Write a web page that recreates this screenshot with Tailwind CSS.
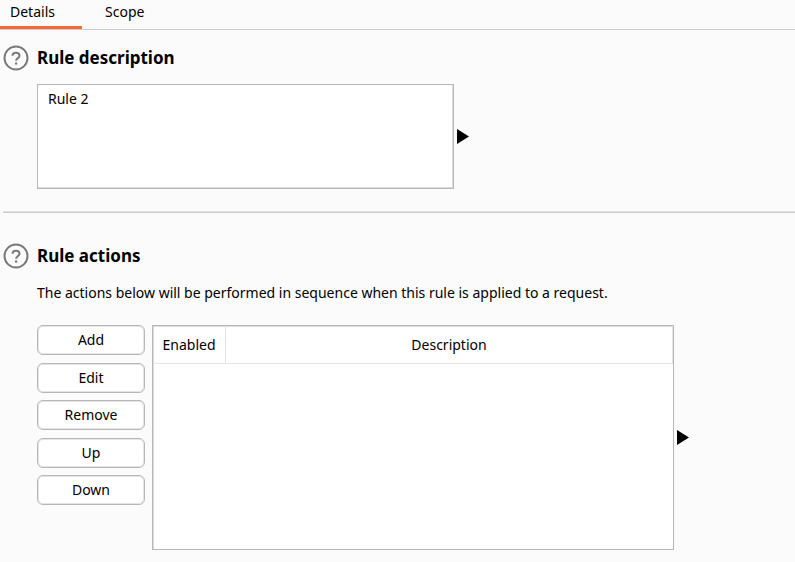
<!DOCTYPE html>
<html lang="en">
<head>
<meta charset="utf-8">
<meta name="viewport" content="width=device-width, initial-scale=1">
<title>Rule editor</title>
<script src="https://cdn.jsdelivr.net/npm/@tailwindcss/browser@4"></script>
</head>
<body class="min-h-screen bg-[#fbfbfb] font-['Noto_Sans','Open_Sans',sans-serif] text-[14px] leading-5 text-black">
<nav role="tablist" class="flex h-[30px] items-start border-b border-[#cccfcd]">
  <button role="tab" aria-selected="true" class="flex h-[29px] w-[82px] items-start border-b-3 border-[#ff6633] pt-[2px] pl-[10px]">Details</button>
  <button role="tab" aria-selected="false" class="flex h-[29px] w-[88px] items-start pt-[2px] pl-[23px]">Scope</button>
</nav>
<main>
  <section class="pt-[15px] pl-[3px]">
    <header class="flex items-center gap-2">
      <button aria-label="Help on rule description" class="shrink-0">
        <svg class="block size-[26px]" viewBox="0 0 26 26" fill="none" stroke="#7b7b7b" stroke-width="2"><circle cx="13" cy="13" r="11.5"/><path d="M9.5 10.8C9.5 8.9 11 7.8 13 7.8s3.5 1.2 3.5 2.9c0 2.4-3.4 2.5-3.4 5"/><circle cx="13.1" cy="18.5" r="1.2" fill="#7b7b7b" stroke="none"/></svg>
      </button>
      <h1 class="text-[17px] leading-6 font-bold"><label for="description">Rule description</label></h1>
    </header>
    <div class="mt-[13px] ml-[34px] flex items-center gap-[3px] pr-4">
      <textarea id="description" class="block h-[105px] w-full max-w-[417px] resize-none border border-[#bab6b8] bg-white px-[10px] py-1 shadow-[inset_-1px_-1px_#dedcdd] outline-none">Rule 2</textarea>
      <button aria-label="Expand description" class="shrink-0"><svg class="block h-[15px] w-3" viewBox="0 0 12 15"><path d="M0 0l12 7.5L0 15z"/></svg></button>
    </div>
  </section>
  <hr class="mt-[22px] ml-[3px] h-0.5 border-t border-b border-t-[#e2e2e2] border-b-[#cbcbcb]">
  <section class="pt-[30px] pb-3 pl-[3px]">
    <header class="flex items-center gap-2">
      <button aria-label="Help on rule actions" class="shrink-0">
        <svg class="block size-[26px]" viewBox="0 0 26 26" fill="none" stroke="#7b7b7b" stroke-width="2"><circle cx="13" cy="13" r="11.5"/><path d="M9.5 10.8C9.5 8.9 11 7.8 13 7.8s3.5 1.2 3.5 2.9c0 2.4-3.4 2.5-3.4 5"/><circle cx="13.1" cy="18.5" r="1.2" fill="#7b7b7b" stroke="none"/></svg>
      </button>
      <h2 class="text-[17px] leading-6 font-bold">Rule actions</h2>
    </header>
    <div class="ml-[34px] pr-4">
      <p class="mt-[14px]">The actions below will be performed in sequence when this rule is applied to a request.</p>
      <div class="mt-[22px] flex items-start">
        <div class="flex h-[180px] w-[108px] shrink-0 flex-col justify-between">
          <button class="h-[30px] rounded-md border border-[#bab6b8] bg-white shadow-[inset_0_0_0_1px_#e6e4e5]">Add</button>
          <button class="h-[30px] rounded-md border border-[#bab6b8] bg-white shadow-[inset_0_0_0_1px_#e6e4e5]">Edit</button>
          <button class="h-[30px] rounded-md border border-[#bab6b8] bg-white shadow-[inset_0_0_0_1px_#e6e4e5]">Remove</button>
          <button class="h-[30px] rounded-md border border-[#bab6b8] bg-white shadow-[inset_0_0_0_1px_#e6e4e5]">Up</button>
          <button class="h-[30px] rounded-md border border-[#bab6b8] bg-white shadow-[inset_0_0_0_1px_#e6e4e5]">Down</button>
        </div>
        <div class="ml-[7px] flex flex-1 items-center gap-[3px]">
          <div class="h-[225px] w-full max-w-[522px] border border-[#b8b6b7] bg-white shadow-[inset_1px_1px_#dddcdc]">
            <table class="w-full table-fixed border-separate border-spacing-0">
              <thead>
                <tr class="h-[38px]">
                  <th scope="col" class="w-[73px] border-r border-b border-[#e4e4e4] p-0 font-normal">Enabled</th>
                  <th scope="col" class="border-r border-b border-[#e4e4e4] p-0 font-normal">Description</th>
                </tr>
              </thead>
              <tbody></tbody>
            </table>
          </div>
          <button aria-label="Expand actions" class="shrink-0"><svg class="block h-[15px] w-3" viewBox="0 0 12 15"><path d="M0 0l12 7.5L0 15z"/></svg></button>
        </div>
      </div>
    </div>
  </section>
</main>
</body>
</html>
